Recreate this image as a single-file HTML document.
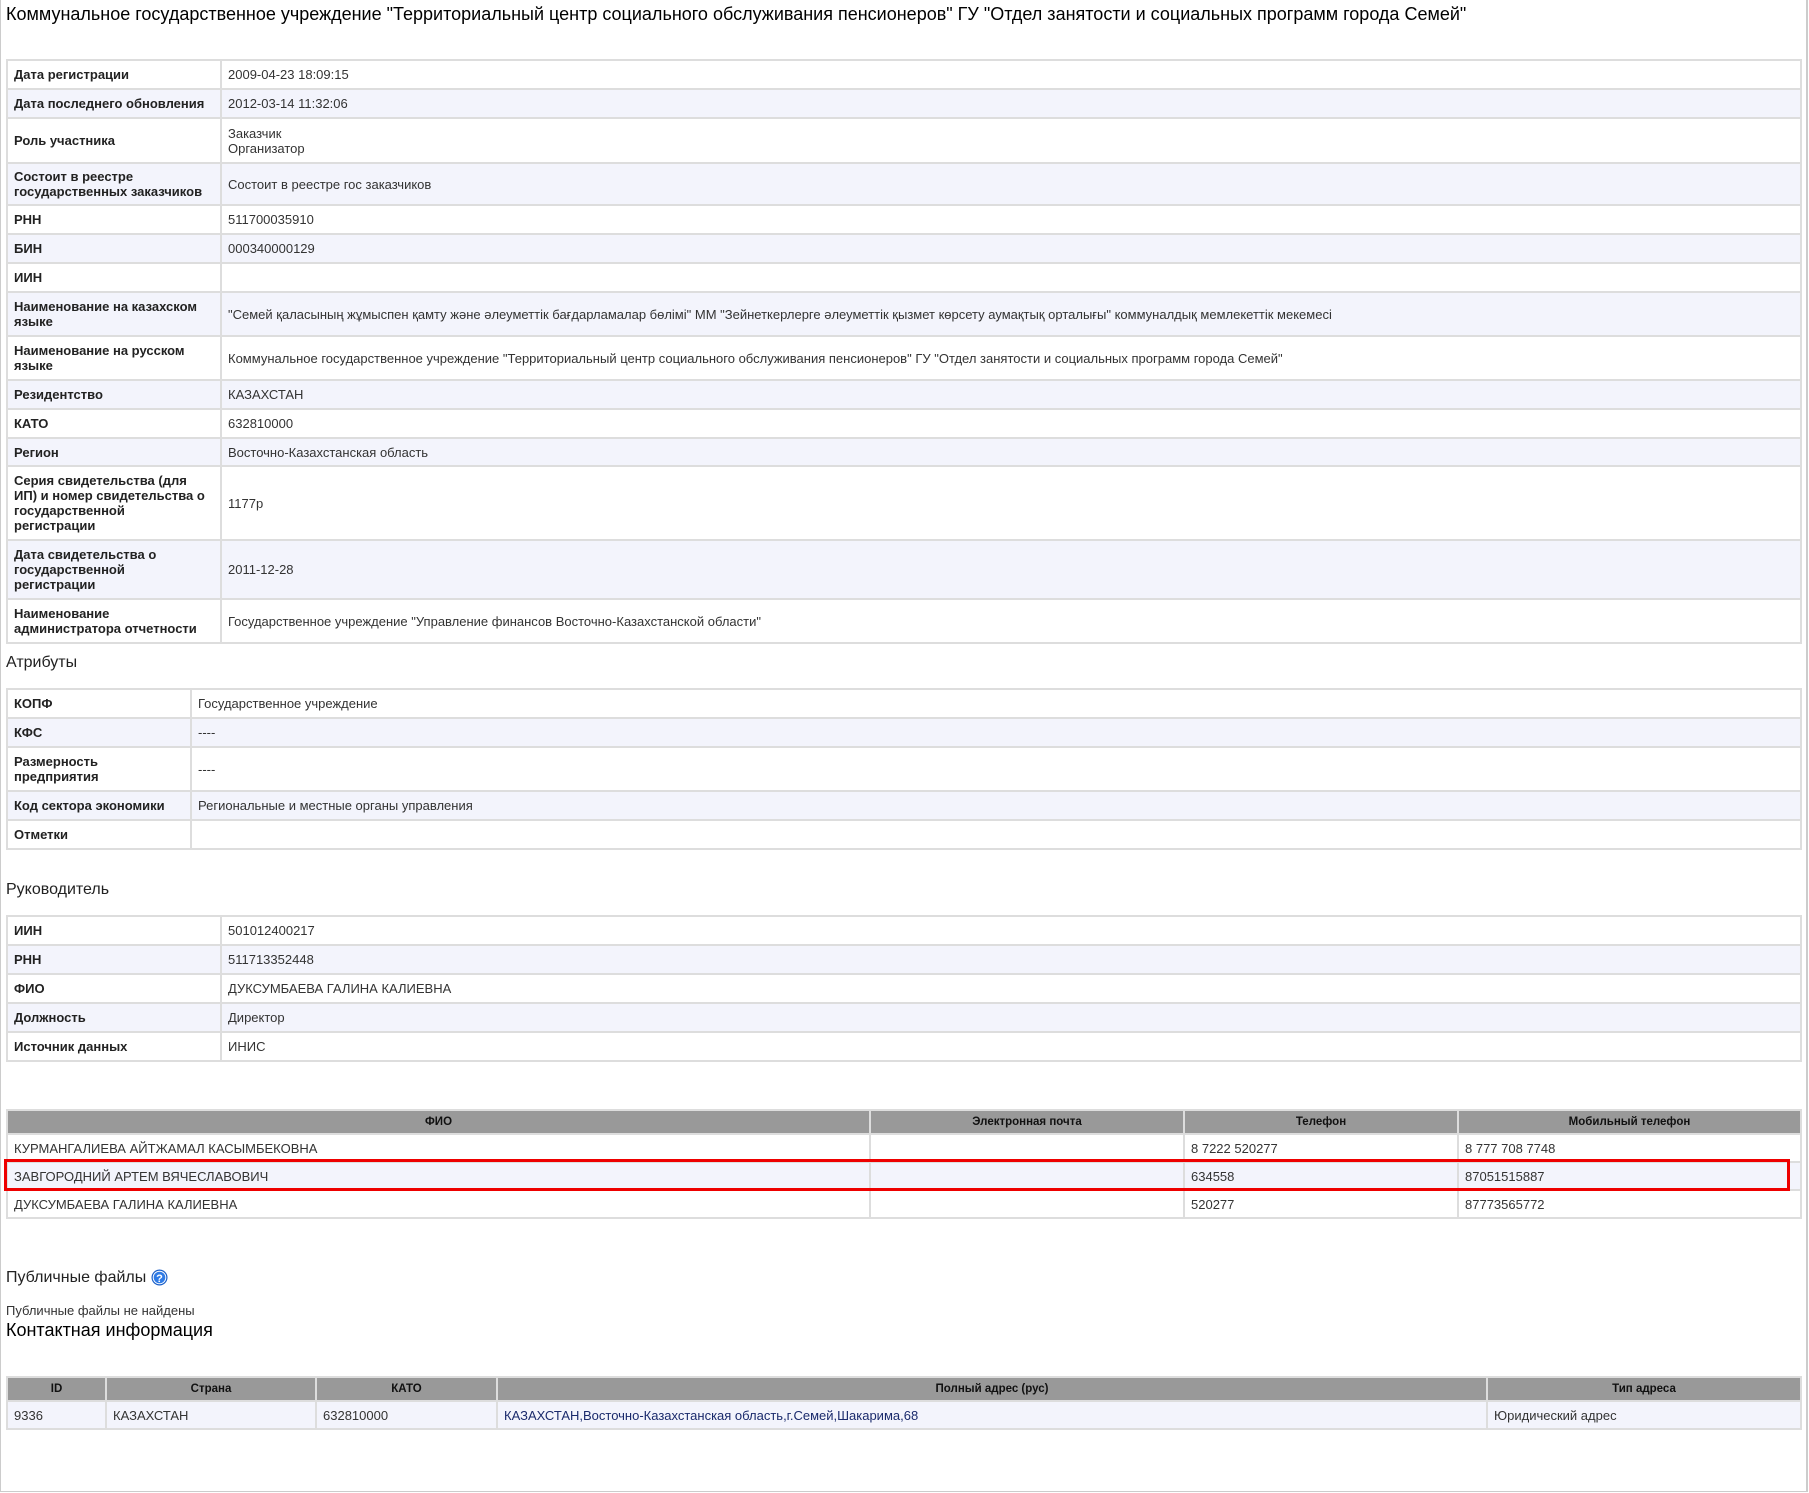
<!DOCTYPE html>
<html><head><meta charset="utf-8"><style>
html,body{margin:0;padding:0;background:#fff;}
body{width:1809px;height:1493px;position:relative;overflow:hidden;font-family:"Liberation Sans",Arial,sans-serif;color:#333;}
.frame{position:absolute;left:0;top:0;width:1805px;height:1491px;border-left:1px solid #ccc;border-right:2px solid #ccc;border-bottom:1px solid #ccc;}
.abs{position:absolute;}
h1{position:absolute;left:6px;top:4px;margin:0;font-weight:normal;font-size:18px;color:#000;white-space:nowrap;}
table{position:absolute;border-collapse:collapse;font-size:13px;table-layout:fixed;}
td,th{border:2px solid #ddd;padding:0 6px;vertical-align:middle;line-height:15px;}
td.l{font-weight:bold;color:#222;}
tr.a td{background:#fff;}
tr.b td{background:#f3f4fc;}
th{background:#999;color:#111;font-size:11.5px;font-weight:bold;height:22px;padding:0;text-align:center;}
.h2{position:absolute;font-size:16px;color:#222;white-space:nowrap;}
</style></head><body>
<div class="frame"></div>
<h1>Коммунальное государственное учреждение "Территориальный центр социального обслуживания пенсионеров" ГУ "Отдел занятости и социальных программ города Семей"</h1>

<table style="left:6px;top:59px;width:1796px;">
<colgroup><col style="width:214px"><col></colgroup>
<tr class="a" style="height:29px"><td class="l">Дата регистрации</td><td>2009-04-23 18:09:15</td></tr>
<tr class="b" style="height:29px"><td class="l">Дата последнего обновления</td><td>2012-03-14 11:32:06</td></tr>
<tr class="a" style="height:45px"><td class="l">Роль участника</td><td>Заказчик<br>Организатор</td></tr>
<tr class="b" style="height:42px"><td class="l">Состоит в реестре государственных заказчиков</td><td>Состоит в реестре гос заказчиков</td></tr>
<tr class="a" style="height:29px"><td class="l">РНН</td><td>511700035910</td></tr>
<tr class="b" style="height:29px"><td class="l">БИН</td><td>000340000129</td></tr>
<tr class="a" style="height:29px"><td class="l">ИИН</td><td></td></tr>
<tr class="b" style="height:44px"><td class="l">Наименование на казахском языке</td><td>"Семей қаласының жұмыспен қамту және әлеуметтік бағдарламалар бөлімі" ММ "Зейнеткерлерге әлеуметтік қызмет көрсету аумақтық орталығы" коммуналдық мемлекеттік мекемесі</td></tr>
<tr class="a" style="height:44px"><td class="l">Наименование на русском языке</td><td>Коммунальное государственное учреждение "Территориальный центр социального обслуживания пенсионеров" ГУ "Отдел занятости и социальных программ города Семей"</td></tr>
<tr class="b" style="height:29px"><td class="l">Резидентство</td><td>КАЗАХСТАН</td></tr>
<tr class="a" style="height:29px"><td class="l">КАТО</td><td>632810000</td></tr>
<tr class="b" style="height:28px"><td class="l">Регион</td><td>Восточно-Казахстанская область</td></tr>
<tr class="a" style="height:74px"><td class="l">Серия свидетельства (для<br>ИП) и номер свидетельства о<br>государственной<br>регистрации</td><td>1177р</td></tr>
<tr class="b" style="height:59px"><td class="l">Дата свидетельства о<br>государственной<br>регистрации</td><td>2011-12-28</td></tr>
<tr class="a" style="height:44px"><td class="l">Наименование администратора отчетности</td><td>Государственное учреждение "Управление финансов Восточно-Казахстанской области"</td></tr>
</table>

<div class="h2" style="left:6px;top:654px;">Атрибуты</div>
<table style="left:6px;top:688px;width:1796px;">
<colgroup><col style="width:184px"><col></colgroup>
<tr class="a" style="height:29px"><td class="l">КОПФ</td><td>Государственное учреждение</td></tr>
<tr class="b" style="height:29px"><td class="l">КФС</td><td>----</td></tr>
<tr class="a" style="height:44px"><td class="l">Размерность предприятия</td><td>----</td></tr>
<tr class="b" style="height:29px"><td class="l">Код сектора экономики</td><td>Региональные и местные органы управления</td></tr>
<tr class="a" style="height:29px"><td class="l">Отметки</td><td></td></tr>
</table>

<div class="h2" style="left:6px;top:881px;">Руководитель</div>
<table style="left:6px;top:915px;width:1796px;">
<colgroup><col style="width:214px"><col></colgroup>
<tr class="a" style="height:29px"><td class="l">ИИН</td><td>501012400217</td></tr>
<tr class="b" style="height:29px"><td class="l">РНН</td><td>511713352448</td></tr>
<tr class="a" style="height:29px"><td class="l">ФИО</td><td>ДУКСУМБАЕВА ГАЛИНА КАЛИЕВНА</td></tr>
<tr class="b" style="height:29px"><td class="l">Должность</td><td>Директор</td></tr>
<tr class="a" style="height:29px"><td class="l">Источник данных</td><td>ИНИС</td></tr>
</table>

<table style="left:6px;top:1109px;width:1796px;">
<colgroup><col style="width:863px"><col style="width:314px"><col style="width:274px"><col></colgroup>
<tr><th>ФИО</th><th>Электронная почта</th><th>Телефон</th><th>Мобильный телефон</th></tr>
<tr class="a" style="height:28px"><td>КУРМАНГАЛИЕВА АЙТЖАМАЛ КАСЫМБЕКОВНА</td><td></td><td>8 7222 520277</td><td>8 777 708 7748</td></tr>
<tr class="b" style="height:28px"><td>ЗАВГОРОДНИЙ АРТЕМ ВЯЧЕСЛАВОВИЧ</td><td></td><td>634558</td><td>87051515887</td></tr>
<tr class="a" style="height:28px"><td>ДУКСУМБАЕВА ГАЛИНА КАЛИЕВНА</td><td></td><td>520277</td><td>87773565772</td></tr>
</table>
<div class="abs" style="left:4px;top:1159px;width:1780px;height:26px;border:3px solid #e00;"></div>

<div class="h2" style="left:6px;top:1269px;">Публичные файлы</div>
<svg class="abs" style="left:151px;top:1269px" width="17" height="17" viewBox="0 0 17 17"><circle cx="8.5" cy="8.5" r="8" fill="#1a5fc8"/><circle cx="8.5" cy="8.5" r="6.3" fill="#2f7be6" stroke="#fff" stroke-width="1"/><text x="8.5" y="12.8" text-anchor="middle" font-family="Liberation Sans" font-weight="bold" font-size="11" fill="#fff">?</text></svg>
<div class="abs" style="left:6px;top:1303px;font-size:13px;color:#333;">Публичные файлы не найдены</div>
<div class="abs" style="left:6px;top:1320px;font-size:18px;color:#000;">Контактная информация</div>

<table style="left:6px;top:1376px;width:1796px;">
<colgroup><col style="width:99px"><col style="width:210px"><col style="width:181px"><col style="width:990px"><col></colgroup>
<tr><th>ID</th><th>Страна</th><th>КАТО</th><th>Полный адрес (рус)</th><th>Тип адреса</th></tr>
<tr class="b" style="height:28px"><td>9336</td><td>КАЗАХСТАН</td><td>632810000</td><td style="color:#1a2a6c">КАЗАХСТАН,Восточно-Казахстанская область,г.Семей,Шакарима,68</td><td>Юридический адрес</td></tr>
</table>
</body></html>
